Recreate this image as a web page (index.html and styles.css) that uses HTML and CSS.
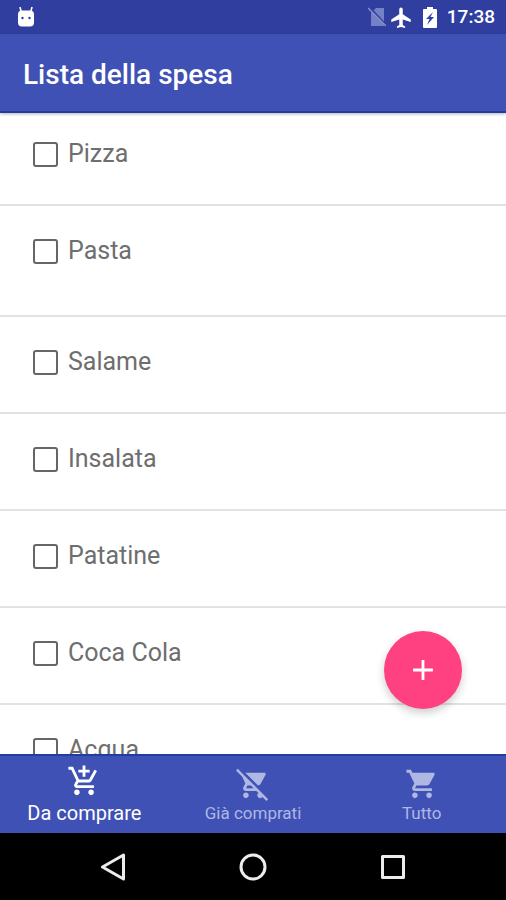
FILE: index.html
```
<!DOCTYPE html>
<html lang="it">
<head>
  <meta charset="UTF-8">
  <meta name="viewport" content="width=device-width, initial-scale=1">
  <title>Lista della spesa</title>
  <link rel="stylesheet" href="styles.css">
</head>
<body>
  <div class="status-bar">
    <svg class="status-icon" width="18" height="20" viewBox="0 0 18 20">
      <path d="M3 0l1 4M15 0l-1 4" stroke="#fff" stroke-width="1.6"/>
      <rect x="1" y="3.500" width="16" height="16" rx="4" fill="#fff"/>
      <circle cx="5.500" cy="11" r="1.200" fill="#303f9f"/>
      <circle cx="12.500" cy="11" r="1.200" fill="#303f9f"/>
    </svg>
    <div class="status-right">
      <svg class="no-sim" width="18" height="20" viewBox="0 0 18 20">
        <path d="M8 1h8v18H3V6z" fill="#7481c4"/>
        <path d="M2 1l17 18" stroke="#303f9f" stroke-width="2"/>
        <path d="M0 1l18 18" stroke="#8590cc" stroke-width="1.500"/>
      </svg>
      <svg width="20" height="21" viewBox="2 1.500 19 20.500" fill="#fff">
        <path d="M9.800 8.600V3.800a1.700 1.700 0 0 1 3.400 0v4.800l7.800 5v2.500l-7.800-2.400V19l2.300 1.500V22l-4-1-4 1v-1.500L9.800 19v-5.300L2 16.100v-2.500z"/>
      </svg>
      <svg class="battery" width="14" height="21" viewBox="0 0 14 21">
        <path d="M4 0h6v2h3a1 1 0 0 1 1 1v17a1 1 0 0 1-1 1H1a1 1 0 0 1-1-1V3a1 1 0 0 1 1-1h3z" fill="#fff"/>
        <path d="M10 5l-7 7h3.500L4 18l7-8H7.500z" fill="#303f9f"/>
      </svg>
      <span class="clock">17:38</span>
    </div>
  </div>

  <header class="app-bar">
    <h1>Lista della spesa</h1>
  </header>

  <main class="content">
    <ul class="shopping-list">
      <li class="item"><label><input type="checkbox">Pizza</label></li>
      <li class="item tall"><label><input type="checkbox">Pasta</label></li>
      <li class="item"><label><input type="checkbox">Salame</label></li>
      <li class="item"><label><input type="checkbox">Insalata</label></li>
      <li class="item"><label><input type="checkbox">Patatine</label></li>
      <li class="item"><label><input type="checkbox">Coca Cola</label></li>
      <li class="item"><label><input type="checkbox">Acqua</label></li>
    </ul>
    <button class="fab" aria-label="Aggiungi">
      <svg width="34" height="34" viewBox="0 0 24 24" fill="#fff">
        <path d="M19 13h-6v6h-2v-6H5v-2h6V5h2v6h6z"/>
      </svg>
    </button>
  </main>

  <nav class="bottom-nav">
    <button class="tab active">
      <svg width="34" height="34" viewBox="0 0 24 24" fill="currentColor">
        <path d="M11 9h2V6h3V4h-3V1h-2v3H8v2h3v3zm-4 9c-1.100 0-1.990.9-1.990 2S5.900 22 7 22s2-.9 2-2-.9-2-2-2zm10 0c-1.100 0-1.990.9-1.990 2s.89 2 1.990 2 2-.9 2-2-.9-2-2-2zm-9.830-3.250l.03-.12.9-1.630h7.450c.75 0 1.410-.41 1.750-1.030l3.860-7.010L19.420 4h-.01l-1.100 2-2.760 5H8.530l-.13-.27L6.160 6l-.95-2-.94-2H1v2h2l3.600 7.590-1.350 2.450c-.16.28-.25.61-.25.96 0 1.100.9 2 2 2h12v-2H7.420c-.13 0-.25-.11-.25-.25z"/>
      </svg>
      <span>Da comprare</span>
    </button>
    <button class="tab">
      <svg width="34" height="34" viewBox="0 0 24 24" fill="currentColor">
        <path d="M22.730 22.730L2.770 2.770 2 2l-.73-.73L0 2.540l4.390 4.390 2.210 4.660-1.350 2.450c-.16.28-.25.61-.25.96 0 1.100.9 2 2 2h7.460l1.380 1.380c-.5.36-.83.95-.83 1.620 0 1.100.89 2 1.990 2 .67 0 1.260-.33 1.620-.84L21.460 24l1.270-1.270zM7.420 15c-.14 0-.25-.11-.25-.25l.03-.12.9-1.630h2.360l2 2H7.420zm8.130-2c.75 0 1.410-.41 1.750-1.030l3.580-6.490c.08-.14.12-.31.12-.48 0-.55-.45-1-1-1H6.540l9.010 9zM7 18c-1.100 0-1.990.9-1.990 2S5.900 22 7 22s2-.9 2-2-.9-2-2-2z"/>
      </svg>
      <span>Già comprati</span>
    </button>
    <button class="tab">
      <svg width="34" height="34" viewBox="0 0 24 24" fill="currentColor">
        <path d="M7 18c-1.100 0-1.990.9-1.990 2S5.900 22 7 22s2-.9 2-2-.9-2-2-2zM1 2v2h2l3.600 7.590-1.350 2.450c-.16.28-.25.61-.25.96 0 1.100.9 2 2 2h12v-2H7.420c-.14 0-.25-.11-.25-.25l.03-.12.9-1.630h7.450c.75 0 1.410-.41 1.750-1.030l3.580-6.490c.08-.14.12-.31.12-.48 0-.55-.45-1-1-1H5.210l-.94-2H1zm16 16c-1.100 0-1.990.9-1.990 2s.89 2 1.990 2 2-.9 2-2-.9-2-2-2z"/>
      </svg>
      <span>Tutto</span>
    </button>
  </nav>

  <div class="system-nav">
    <button aria-label="Indietro">
      <svg width="28" height="28" viewBox="0 0 28 28">
        <path d="M24.500 2v24L3.500 14z"/>
      </svg>
    </button>
    <button aria-label="Home">
      <svg width="28" height="28" viewBox="0 0 28 28">
        <circle cx="14" cy="14" r="12"/>
      </svg>
    </button>
    <button aria-label="Recenti">
      <svg width="28" height="28" viewBox="0 0 28 28">
        <rect x="3.500" y="3.500" width="21" height="21"/>
      </svg>
    </button>
  </div>
</body>
</html>
```
FILE: styles.css
```
* {
  box-sizing: border-box;
}

body {
  margin: 0;
  height: 100vh;
  display: flex;
  flex-direction: column;
  font-family: Roboto, sans-serif;
  background: #fff;
}

svg {
  display: block;
}

button {
  border: none;
  padding: 0;
  background: none;
  font-family: inherit;
  cursor: pointer;
}

/* Status bar */
.status-bar {
  flex: none;
  height: 34px;
  padding: 0 11px 0 17px;
  display: flex;
  align-items: center;
  justify-content: space-between;
  background: #303f9f;
  color: #fff;
}

.status-right {
  display: flex;
  align-items: center;
}

.no-sim {
  margin-right: 5px;
}

.battery {
  margin: 0 10px 0 12px;
}

.clock {
  font-size: 19px;
  font-weight: 500;
  line-height: 24px;
}

/* App bar */
.app-bar {
  flex: none;
  height: 79px;
  padding: 0 23px;
  display: flex;
  align-items: center;
  background: #3f51b5;
  border-bottom: 2px solid #1f3da3;
  box-shadow: 0 1px 3px rgba(0, 0, 0, 0.3);
  color: #fff;
  z-index: 1;
}

.app-bar h1 {
  margin: 0;
  padding-top: 4px;
  font-size: 28px;
  font-weight: 500;
  line-height: 32px;
}

/* List */
.content {
  flex: 1;
  min-height: 0;
  position: relative;
  overflow: hidden;
}

.shopping-list {
  list-style: none;
  margin: -4px 0 0;
  padding: 0;
}

.item {
  height: 97px;
  padding: 29px 33px 0;
  border-bottom: 2px solid #e2e2e2;
}

.item.tall {
  height: 111px;
}

.item label {
  display: flex;
  align-items: center;
  font-size: 25px;
  line-height: 32px;
  color: #6e6e6e;
}

.item input {
  appearance: none;
  width: 25px;
  height: 25px;
  margin: 0 10px 0 0;
  border: 2px solid #666;
  border-radius: 3px;
}

.item input:checked {
  background: #ff4081;
  border-color: #ff4081;
}

.fab {
  position: absolute;
  right: 44px;
  bottom: 45px;
  width: 78px;
  height: 78px;
  display: flex;
  align-items: center;
  justify-content: center;
  border-radius: 50%;
  background: #ff4081;
  box-shadow: 0 4px 9px rgba(0, 0, 0, 0.2);
}

/* Bottom tabs */
.bottom-nav {
  flex: none;
  height: 79px;
  display: flex;
  background: #3f51b5;
  border-top: 2px solid #1f3da3;
}

.tab {
  flex: 1;
  display: flex;
  flex-direction: column;
  align-items: center;
  justify-content: flex-end;
  padding-bottom: 8px;
  color: #afb7e3;
  font-size: 17px;
  line-height: 24px;
}

.tab.active {
  gap: 3px;
  color: #fff;
  font-size: 20px;
}

/* Android navigation */
.system-nav {
  flex: none;
  height: 67px;
  display: flex;
  align-items: center;
  justify-content: center;
  background: #000;
}

.system-nav button {
  width: 140px;
  display: flex;
  justify-content: center;
}

.system-nav svg {
  fill: none;
  stroke: #ececec;
  stroke-width: 3;
  stroke-linejoin: round;
}
```
